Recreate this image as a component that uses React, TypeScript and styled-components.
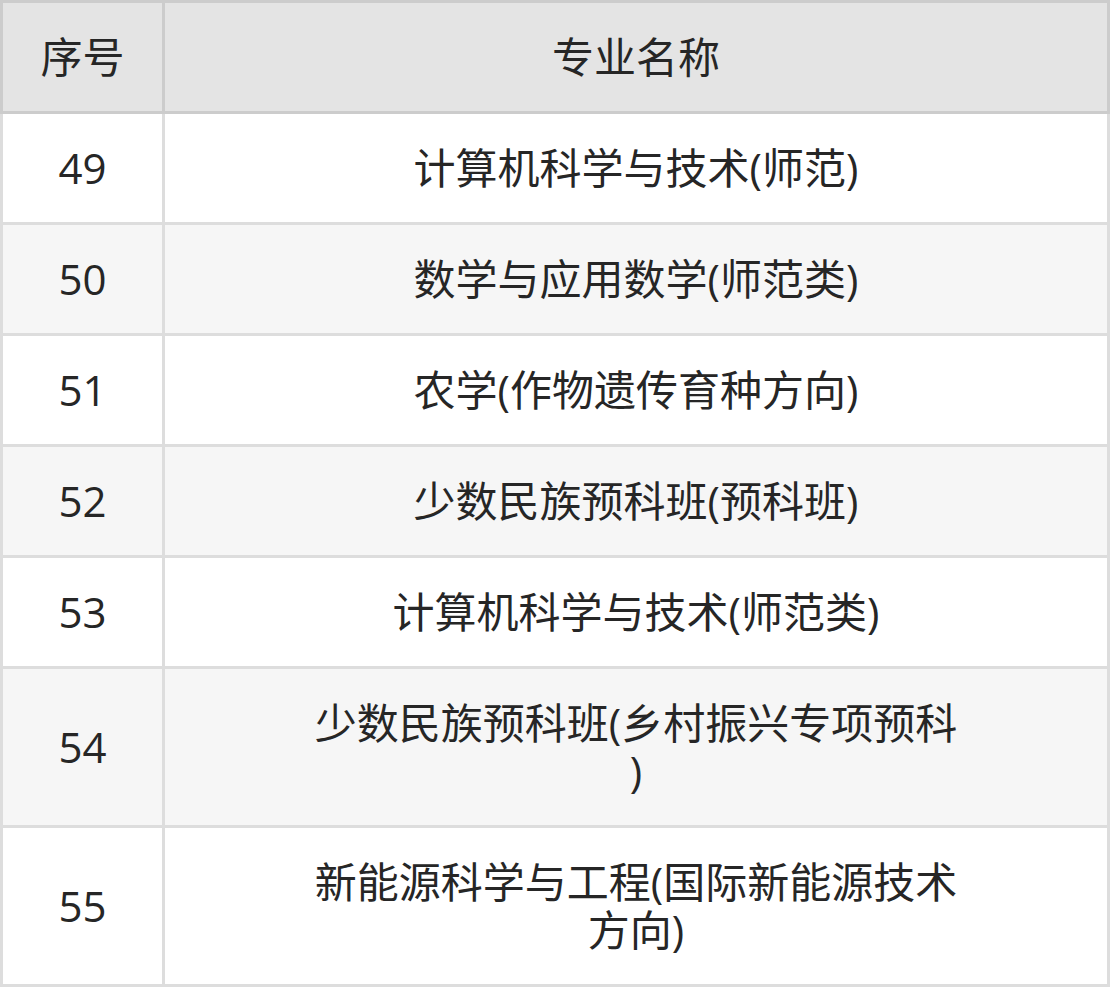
import React from "react";
import styled, { createGlobalStyle } from "styled-components";

const GlobalStyle = createGlobalStyle`
  html, body {
    margin: 0;
    padding: 0;
    background: #ffffff;
  }
  body {
    font-family: "Open Sans", "Noto Sans CJK SC", sans-serif;
  }
`;

const Table = styled.div`
  width: 1110px;
  display: flex;
  flex-direction: column;
  color: #262626;
  font-family: "Open Sans", "Noto Sans CJK SC", sans-serif;
  font-size: 42px;
  line-height: 48px;
`;

const Row = styled.div<{ $header?: boolean; $striped?: boolean }>`
  display: grid;
  grid-template-columns: 162px 945px;
  border-left: 3px solid ${(p) => (p.$header ? "#cccccc" : "#dddddd")};
  border-bottom: 3px solid ${(p) => (p.$header ? "#cccccc" : "#dddddd")};
  border-top: ${(p) => (p.$header ? "3px solid #cccccc" : "none")};
  background: ${(p) =>
    p.$header ? "#e4e4e4" : p.$striped ? "#f6f6f6" : "#ffffff"};
  --line: ${(p) => (p.$header ? "#cccccc" : "#dddddd")};
`;

const IndexCell = styled.div`
  display: flex;
  align-items: center;
  justify-content: center;
  padding: 30px 0;
  border-right: 3px solid var(--line);
  text-align: center;
`;

const NameCell = styled.div`
  display: flex;
  align-items: center;
  justify-content: center;
  padding: 30px 147px;
  border-right: 3px solid var(--line);
  text-align: center;
  line-break: anywhere;
`;

const NameText = styled.span`
  display: block;
  text-align: center;
`;

const rows: [string, string][] = [
  ["49", "计算机科学与技术(师范)"],
  ["50", "数学与应用数学(师范类)"],
  ["51", "农学(作物遗传育种方向)"],
  ["52", "少数民族预科班(预科班)"],
  ["53", "计算机科学与技术(师范类)"],
  ["54", "少数民族预科班(乡村振兴专项预科)"],
  ["55", "新能源科学与工程(国际新能源技术方向)"],
];

export default function App() {
  return (
    <>
      <GlobalStyle />
      <Table>
        <Row $header>
          <IndexCell>序号</IndexCell>
          <NameCell>
            <NameText>专业名称</NameText>
          </NameCell>
        </Row>
        {rows.map(([idx, name], i) => (
          <Row key={idx} $striped={i % 2 === 1}>
            <IndexCell>{idx}</IndexCell>
            <NameCell>
              <NameText>{name}</NameText>
            </NameCell>
          </Row>
        ))}
      </Table>
    </>
  );
}
